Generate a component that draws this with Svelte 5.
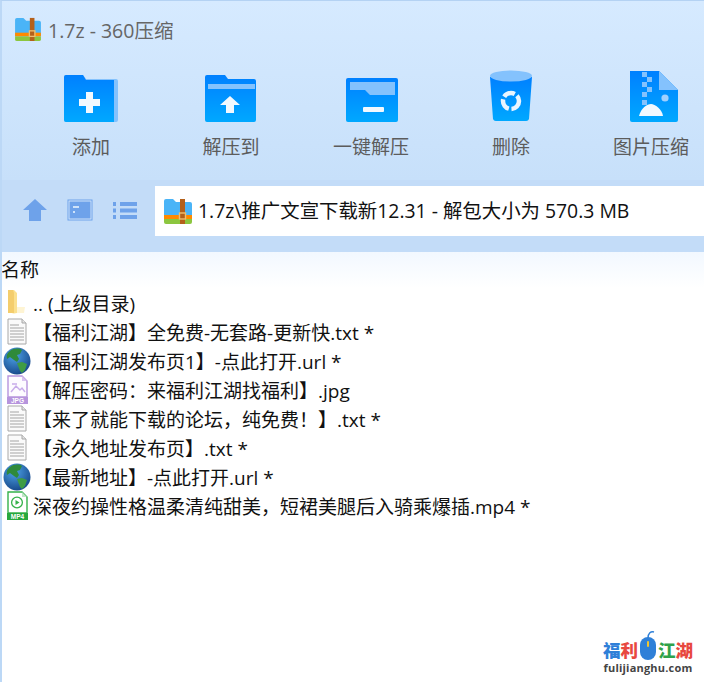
<script>
  const tools = [
    { name: "添加", icon: "add" },
    { name: "解压到", icon: "extract" },
    { name: "一键解压", icon: "oneclick" },
    { name: "删除", icon: "trash" },
    { name: "图片压缩", icon: "image" }
  ];
  const files = [
    { name: ".. (上级目录)", icon: "folder", up: true },
    { name: "【福利江湖】全免费-无套路-更新快.txt *", icon: "txt" },
    { name: "【福利江湖发布页1】-点此打开.url *", icon: "globe" },
    { name: "【解压密码：来福利江湖找福利】.jpg", icon: "jpg" },
    { name: "【来了就能下载的论坛，纯免费！】.txt *", icon: "txt" },
    { name: "【永久地址发布页】.txt *", icon: "txt" },
    { name: "【最新地址】-点此打开.url *", icon: "globe" },
    { name: "深夜约操性格温柔清纯甜美，短裙美腿后入骑乘爆插.mp4 *", icon: "mp4" }
  ];
</script>

{#snippet zipIcon(w, h)}
  <svg width={w} height={h} viewBox="0 0 28 26">
    <path d="M0 3a2 2 0 0 1 2-2h7l3 3h14a2 2 0 0 1 2 2v15H0z" fill="#4ab4f7" />
    <rect y="17" width="28" height="4" fill="#ff8a00" />
    <path d="M0 21h28v3a2 2 0 0 1-2 2H2a2 2 0 0 1-2-2z" fill="#8cc63f" />
    <rect x="16" y="1" width="5" height="25" fill="#b4601a" />
    <rect x="15.5" y="15" width="6" height="6" fill="none" stroke="#f0c070" stroke-width="1.4" />
  </svg>
{/snippet}

{#snippet toolIcon(kind)}
  <svg width="56" height="56" viewBox="0 0 56 56">
    <defs>
      <linearGradient id="tool-{kind}" x1="0" y1="0" x2="0" y2="1">
        <stop offset="0" stop-color="#0080ff" />
        <stop offset="1" stop-color="#00a8ff" />
      </linearGradient>
    </defs>
    {#if kind === "add"}
      <path d="M1 9a2 2 0 0 1 2-2h17l3 4h30a2 2 0 0 1 2 2v39a2 2 0 0 1-2 2H3a2 2 0 0 1-2-2z" fill="#84c2fd" />
      <path d="M1 9a2 2 0 0 1 2-2h17l3 5h28v42H3a2 2 0 0 1-2-2z" fill="url(#tool-add)" />
      <path d="M23 24h7v7h7v7h-7v7h-7v-7h-7v-7h7z" fill="#f2f9ff" />
    {:else if kind === "extract"}
      <path d="M2 9a2 2 0 0 1 2-2h18l3 4h26a2 2 0 0 1 2 2v39a2 2 0 0 1-2 2H4a2 2 0 0 1-2-2z" fill="url(#tool-extract)" />
      <rect x="5" y="16" width="47" height="5" fill="#84c2fd" />
      <path d="M27 28l10 9h-6v8h-8v-8h-6z" fill="#f2f9ff" />
    {:else if kind === "oneclick"}
      <path d="M3 12a2 2 0 0 1 2-2h48a2 2 0 0 1 2 2v40a2 2 0 0 1-2 2H5a2 2 0 0 1-2-2z" fill="url(#tool-oneclick)" />
      <path d="M7 14h45v13H27l-5-5H7z" fill="#84c2fd" />
      <rect x="20" y="39" width="21" height="5" rx="1" fill="#f2f9ff" />
    {:else if kind === "trash"}
      <path d="M7 9l3 42a3 3 0 0 0 3 2h30a3 3 0 0 0 3-2l3-42z" fill="url(#tool-trash)" />
      <ellipse cx="28" cy="8" rx="21" ry="5.5" fill="#84c2fd" />
      <circle cx="28" cy="33" r="8" fill="none" stroke="#eaf5ff" stroke-width="4.5" stroke-dasharray="12 2.7" />
    {:else}
      <path d="M7 3h29l19 19v30a2 2 0 0 1-2 2H9a2 2 0 0 1-2-2z" fill="url(#tool-image)" />
      <path d="M36 3l19 19H36z" fill="#84c2fd" />
      <path d="M19 4h5v5h-5zM24 9h5v5h-5zM19 14h5v5h-5zM24 19h5v5h-5zM19 24h5v5h-5z" fill="#84c2fd" />
      <circle cx="42" cy="30" r="3.6" fill="#9fd0ff" />
      <path d="M16 48c2-8 8-12 12-12s11 5 12 12z" fill="#f2f9ff" />
      <path d="M19 32h5v5h-5z" fill="#84c2fd" />
    {/if}
  </svg>
{/snippet}

{#snippet fileIcon(kind)}
  <svg width="30" height="29" viewBox="0 0 30 29">
    {#if kind === "folder"}
      <path d="M7 2h6l3 3v20l-3 .5c-2-.6-5-.6-6-.5z" fill="#fbe08e" />
      <path d="M7 2h5l1 3v20H7z" fill="#f4cd6c" />
      <path d="M16 5v14h8l-1 6h-7z" fill="#fdf0c0" opacity=".7" />
    {:else if kind === "txt"}
      <path d="M7.5 3.5h14l4 4v21h-18z" transform="translate(-.5 -1.5)" fill="#fafafa" stroke="#a8a8a8" />
      <path d="M21 2v4h4" fill="#e4e4e4" stroke="#a8a8a8" />
      <path d="M9 8h9M9 11h14M9 14h14M9 17h14M9 20h14M9 23h14" stroke="#a4a4a4" />
    {:else if kind === "globe"}
      <defs>
        <radialGradient id="sea" cx=".4" cy=".3" r=".8">
          <stop offset="0" stop-color="#4da3e8" />
          <stop offset="1" stop-color="#123f80" />
        </radialGradient>
      </defs>
      <circle cx="16" cy="15" r="13.500" fill="url(#sea)" />
      <path d="M9 5c4-3 9-3 12-1l-2 4-3 1 2 4-2 3-3-2-4-3-3 2c-1-3 0-6 3-8z" fill="#2f8a3a" />
      <path d="M16 17l5-1 5 2-2 6-3 3-2-2z" fill="#3f9c44" />
    {:else if kind === "jpg"}
      <path d="M7 1h14l5 5v16H7z" fill="#fdfbff" stroke="#b795dd" stroke-width="1.4" />
      <path d="M21 1v5h5z" fill="#d9c5f0" />
      <path d="M10 17l5-6 4 4 2-2 3 4M11 9h5" fill="none" stroke="#c8acea" stroke-width="1.4" />
      <rect x="6" y="22" width="21" height="7" fill="#b795dd" />
      <text x="16.5" y="28" class="tag">JPG</text>
    {:else}
      <path d="M7 1h14l5 5v16H7z" fill="#fff" stroke="#35b24a" stroke-width="1.4" />
      <path d="M21 1v5h5z" fill="#bfe6c6" />
      <circle cx="16" cy="11.5" r="5.4" fill="none" stroke="#35b24a" stroke-width="1.3" />
      <path d="M14.5 9l4 2.5-4 2.5z" fill="#35b24a" />
      <rect x="6" y="22" width="21" height="7" fill="#28a83d" />
      <text x="16.5" y="28" class="tag">MP4</text>
    {/if}
  </svg>
{/snippet}

<div class="window">
  <header class="titlebar">
    <div class="title">
      {@render zipIcon(28, 24)}
      <span>1.7z - 360压缩</span>
    </div>
    <nav class="tools">
      {#each tools as tool}
        <button class="tool">
          {@render toolIcon(tool.icon)}
          <span>{tool.name}</span>
        </button>
      {/each}
    </nav>
  </header>

  <div class="addressrow">
    <div class="navicons">
      <svg width="26" height="22" viewBox="0 0 26 22"><path d="M13 0l12 11h-6v11H7V11H1z" fill="#6ea2ea" /></svg>
      <svg width="26" height="22" viewBox="0 0 26 22">
        <rect x="1" y="1" width="24" height="20" fill="#6ea2ea" stroke="#6ea2ea" />
        <rect x="2" y="2" width="22" height="18" fill="none" stroke="#cfe3fa" />
        <rect x="6" y="7" width="6" height="2" fill="#cfe3fa" />
        <rect x="6" y="12" width="2" height="2" fill="#cfe3fa" />
      </svg>
      <svg width="26" height="22" viewBox="0 0 26 22">
        <path d="M1 3h3v4H1zM8 3h17v4H8zM1 9.500h3v4H1zM8 9.500h17v4H8zM1 16h3v4H1zM8 16h17v4H8z" fill="#6ea2ea" />
      </svg>
    </div>
    <div class="address">
      {@render zipIcon(28, 26)}
      <span class="path">1.7z\推广文宣下载新12.31 - 解包大小为 570.3 MB</span>
    </div>
  </div>

  <main class="list">
    <div class="colhead">名称</div>
    <ul>
      {#each files as file}
        <li class:up={file.up}>
          <span class="ficon">{@render fileIcon(file.icon)}</span>
          <span>{file.name}</span>
        </li>
      {/each}
    </ul>
  </main>

  <div class="watermark">
    <div class="wm-top">
      <span class="wm-a">福</span><span class="wm-c">利</span>
      <svg width="20" height="31" viewBox="0 0 20 31">
        <path d="M10 8C10 3 13 1 16 2" fill="none" stroke="#2f80d8" stroke-width="1.5" />
        <rect x="2" y="7" width="16" height="23" rx="8" fill="#2f80d8" />
        <rect x="9" y="11" width="2" height="6" rx="1" fill="#f3c62d" />
      </svg>
      <span class="wm-b">江</span><span class="wm-c">湖</span>
    </div>
    <div class="wm-url">fulijianghu.com</div>
  </div>
</div>

<style>
  :global(body) {
    margin: 0;
    background: #fff;
  }
  .window {
    position: relative;
    width: 704px;
    height: 682px;
    box-sizing: border-box;
    overflow: hidden;
    border-top: 1px solid #b4d2f3;
    border-left: 2px solid #bcd8f6;
    font-family: "Open Sans", "Noto Sans CJK SC", sans-serif;
    background: #fff;
  }
  .titlebar {
    height: 179px;
    box-sizing: border-box;
    padding: 13px 0 0 12px;
    background: linear-gradient(#d6eaff, #c7e0fa);
  }
  .title {
    display: flex;
    align-items: center;
    gap: 6px;
    height: 30px;
    font-size: 19.5px;
    color: #666;
  }
  .tools {
    display: flex;
    margin: 24px 0 0 7px;
  }
  .tool {
    flex: 0 0 140px;
    display: flex;
    flex-direction: column;
    align-items: center;
    gap: 10px;
    padding: 0;
    border: 0;
    background: none;
    font: inherit;
    font-size: 19px;
    line-height: 26px;
    color: #5c5c5c;
  }
  .addressrow {
    display: flex;
    height: 72px;
    align-items: flex-start;
    background: #c3dcf8;
  }
  .navicons {
    display: flex;
    gap: 19px;
    margin: 19px 0 0 20px;
    width: 133px;
  }
  .address {
    flex: 1;
    height: 50px;
    margin-top: 6px;
    display: flex;
    align-items: center;
    gap: 6px;
    padding-left: 9px;
    background: #fff;
    font-size: 19.4px;
    color: #111;
  }
  .path {
    margin-bottom: 3px;
  }
  .list {
    font-size: 19px;
    color: #111;
  }
  .colhead {
    height: 36px;
    line-height: 36px;
    margin-left: -1px;
    background: linear-gradient(#f2f8ff, #fff);
  }
  ul {
    list-style: none;
    margin: 0;
    padding: 0;
  }
  li {
    display: flex;
    align-items: center;
    height: 29px;
    white-space: nowrap;
  }
  .ficon {
    display: flex;
    width: 32px;
    margin-left: -1px;
  }
  .tag {
    font: bold 6.5px "Liberation Sans", sans-serif;
    fill: #fff;
    text-anchor: middle;
  }
  .watermark {
    position: absolute;
    right: 11px;
    bottom: 8px;
    width: 90px;
    text-align: center;
  }
  .wm-top {
    display: flex;
    align-items: flex-end;
    justify-content: center;
    font-size: 17.5px;
    font-weight: 900;
    line-height: 22px;
    white-space: nowrap;
  }
  .wm-a {
    color: #2f80d8;
  }
  .wm-b {
    color: #2fa24a;
  }
  .wm-c {
    color: #e8483f;
  }
  .wm-url {
    font: bold 11px/13px "Open Sans", sans-serif;
    color: #444;
    letter-spacing: .2px;
  }
</style>
